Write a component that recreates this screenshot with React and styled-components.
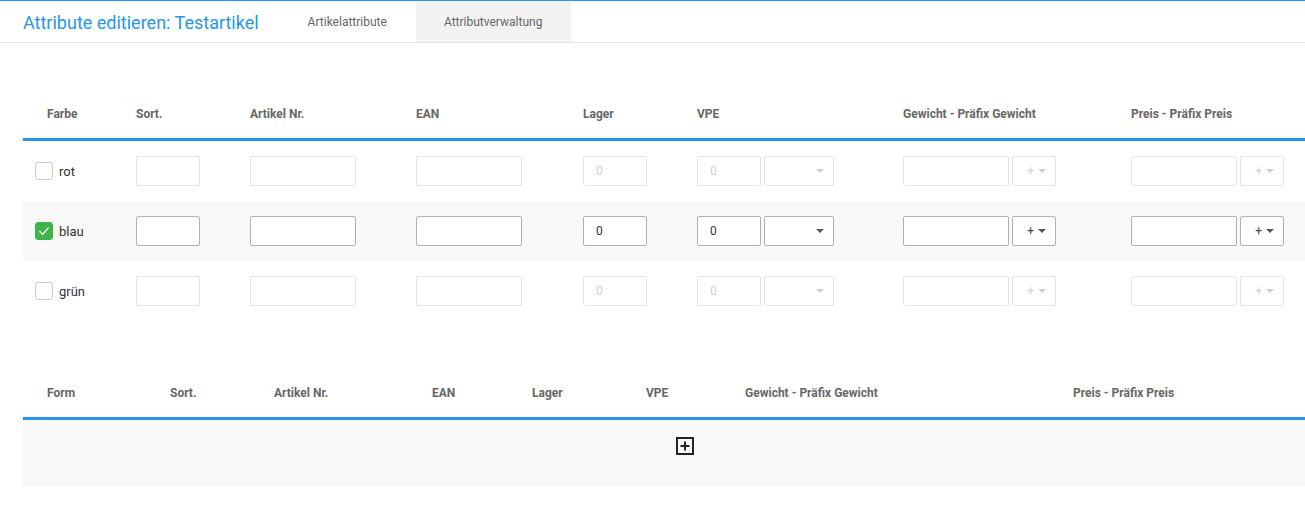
import React from "react";
import styled, { createGlobalStyle } from "styled-components";

const GlobalStyle = createGlobalStyle`
  html, body {
    margin: 0;
    padding: 0;
    overflow: hidden;
    background: #fff;
    font-family: Roboto, "Liberation Sans", sans-serif;
  }
`;

const Page = styled.div`
  width: 1305px;
  height: 505px;
  border-top: 1px solid #2196f3;
  box-sizing: border-box;
  overflow: hidden;
`;

const Header = styled.div`
  display: flex;
  align-items: stretch;
  height: 40px;
  padding: 1px 0 0 23px;
  border-bottom: 1px solid #e3e3e3;
`;

const Title = styled.h1`
  margin: 0 21px 0 0;
  display: flex;
  align-items: center;
  font-size: 18px;
  font-weight: 400;
  color: #2196f3;
`;

const Tab = styled.div`
  display: flex;
  align-items: center;
  padding: 0 29px 0 28px;
  font-size: 12px;
  color: #666;
  background: ${(p) => (p.$active ? "#f2f2f2" : "transparent")};
`;

const Content = styled.div`
  padding: 47px 0 0 23px;
`;

const Table = styled.table`
  width: 1324px;
  border-collapse: separate;
  border-spacing: 0;
  table-layout: fixed;
  margin-bottom: 48px;
`;

const Th = styled.th`
  box-sizing: border-box;
  height: 51px;
  padding: 0 12px;
  text-align: left;
  font-size: 12px;
  font-weight: 700;
  color: #666;
  border-bottom: 3px solid #2196f3;
  white-space: nowrap;
  &:first-child {
    padding-left: 24px;
  }
`;

const Row = styled.tr`
  background: ${(p) => (p.$alt ? "#f8f8f8" : "#fff")};
`;

const Td = styled.td`
  box-sizing: border-box;
  height: 60px;
  padding: 0 12px;
  vertical-align: middle;
`;

const EmptyTd = styled.td`
  box-sizing: border-box;
  height: 67px;
  padding: 17px 0 0;
  vertical-align: top;
  text-align: center;
  background: #f8f8f8;
`;

const ColorLabel = styled.label`
  display: flex;
  align-items: center;
  gap: 6px;
  font-size: 13px;
  color: #333;
`;

const Check = styled.span`
  width: 18px;
  height: 18px;
  box-sizing: border-box;
  border-radius: 3px;
  border: 1px solid ${(p) => (p.$checked ? "#3db54b" : "#c8c8c8")};
  background: ${(p) => (p.$checked ? "#3db54b" : "#fff")};
  display: flex;
  align-items: center;
  justify-content: center;
`;

const Field = styled.div`
  width: ${(p) => p.$w}px;
  height: 30px;
  box-sizing: border-box;
  border: 1px solid ${(p) => (p.$off ? "#e4e4e4" : "#b0b0b0")};
  border-radius: 2px;
  background: #fff;
  padding: 0 12px;
  display: flex;
  align-items: center;
  font-size: 12px;
  color: ${(p) => (p.$off ? "#cfcfcf" : "#333")};
`;

const SelectBox = styled.div`
  width: ${(p) => p.$w}px;
  height: 30px;
  box-sizing: border-box;
  border: 1px solid ${(p) => (p.$off ? "#e4e4e4" : "#b0b0b0")};
  border-radius: 2px;
  background: #fff;
  padding: 0 9px;
  display: flex;
  align-items: center;
  justify-content: flex-end;
  gap: 4px;
  font-size: 12px;
  color: ${(p) => (p.$off ? "#cfcfcf" : "#444")};
`;

const Caret = styled.span`
  width: 0;
  height: 0;
  border-left: 4px solid transparent;
  border-right: 4px solid transparent;
  border-top: 4px solid ${(p) => (p.$off ? "#cfcfcf" : "#555")};
`;

const Pair = styled.div`
  display: flex;
  gap: 3px;
`;

const CheckMark = () => (
  <svg width="12" height="10" viewBox="0 0 12 10">
    <path d="M1.5 5.2 L4.6 8.2 L10.5 1.8" fill="none" stroke="#fff" strokeWidth="1.3" />
  </svg>
);

const AddIcon = () => (
  <svg width="18" height="18" viewBox="0 0 18 18">
    <rect x="1" y="1" width="16" height="16" fill="none" stroke="#222" strokeWidth="2" />
    <path d="M9 4.5 V13.5 M4.5 9 H13.5" stroke="#222" strokeWidth="2" />
  </svg>
);

const colorCols = [101, 114, 166, 167, 114, 206, 228, 228];
const formCols = [135, 104, 158, 100, 114, 99, 328, 286];
const colorHeads = [
  "Farbe",
  "Sort.",
  "Artikel Nr.",
  "EAN",
  "Lager",
  "VPE",
  "Gewicht - Präfix Gewicht",
  "Preis - Präfix Preis",
];
const formHeads = ["Form", ...colorHeads.slice(1)];

const colors = [
  { name: "rot", on: false },
  { name: "blau", on: true },
  { name: "grün", on: false },
];

const ColorRow = ({ name, on, alt }) => {
  const off = !on;
  return (
    <Row $alt={alt}>
      <Td>
        <ColorLabel>
          <Check $checked={on}>{on && <CheckMark />}</Check>
          {name}
        </ColorLabel>
      </Td>
      <Td>
        <Field $w={64} $off={off} />
      </Td>
      <Td>
        <Field $w={106} $off={off} />
      </Td>
      <Td>
        <Field $w={106} $off={off} />
      </Td>
      <Td>
        <Field $w={64} $off={off}>0</Field>
      </Td>
      <Td>
        <Pair>
          <Field $w={64} $off={off}>0</Field>
          <SelectBox $w={70} $off={off}>
            <Caret $off={off} />
          </SelectBox>
        </Pair>
      </Td>
      <Td>
        <Pair>
          <Field $w={106} $off={off} />
          <SelectBox $w={44} $off={off}>
            +<Caret $off={off} />
          </SelectBox>
        </Pair>
      </Td>
      <Td>
        <Pair>
          <Field $w={106} $off={off} />
          <SelectBox $w={44} $off={off}>
            +<Caret $off={off} />
          </SelectBox>
        </Pair>
      </Td>
    </Row>
  );
};

const App = () => {
  return (
    <>
      <GlobalStyle />
      <Page>
        <Header>
          <Title>Attribute editieren: Testartikel</Title>
          <Tab>Artikelattribute</Tab>
          <Tab $active>Attributverwaltung</Tab>
        </Header>
        <Content>
          <Table>
            <colgroup>
              {colorCols.map((w, i) => (
                <col key={i} style={{ width: w }} />
              ))}
            </colgroup>
            <thead>
              <tr>
                {colorHeads.map((h) => (
                  <Th key={h}>{h}</Th>
                ))}
              </tr>
            </thead>
            <tbody>
              {colors.map((c, i) => (
                <ColorRow key={c.name} name={c.name} on={c.on} alt={i === 1} />
              ))}
            </tbody>
          </Table>

          <Table>
            <colgroup>
              {formCols.map((w, i) => (
                <col key={i} style={{ width: w }} />
              ))}
            </colgroup>
            <thead>
              <tr>
                {formHeads.map((h) => (
                  <Th key={h}>{h}</Th>
                ))}
              </tr>
            </thead>
            <tbody>
              <tr>
                <EmptyTd colSpan={8}>
                  <AddIcon />
                </EmptyTd>
              </tr>
            </tbody>
          </Table>
        </Content>
      </Page>
    </>
  );
};

export default App;
